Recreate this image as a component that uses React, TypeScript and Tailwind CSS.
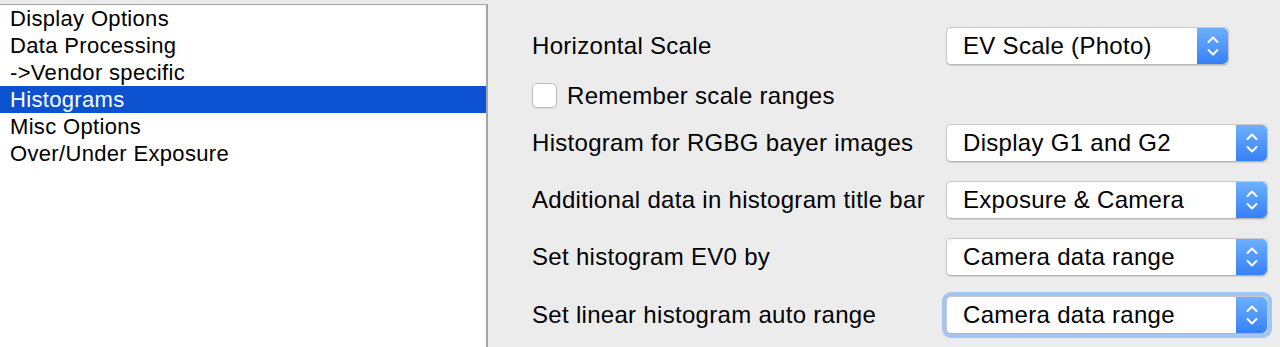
import React from "react";

const items = [
  "Display Options",
  "Data Processing",
  "->Vendor specific",
  "Histograms",
  "Misc Options",
  "Over/Under Exposure",
];

function Stepper() {
  return (
    <div className="w-[31px] h-full rounded-r-[5px] bg-linear-to-b from-[#6db0fd] to-[#3580f7] flex items-center justify-center">
      <svg width="14" height="24" viewBox="0 0 14 24" fill="none" stroke="white" strokeWidth="2" strokeLinecap="round" strokeLinejoin="round">
        <path d="M2.5 8 L7 3.5 L11.5 8" />
        <path d="M2.5 16 L7 20.5 L11.5 16" />
      </svg>
    </div>
  );
}

function Select({ value, width, focused }: { value: string; width: string; focused?: boolean }) {
  return (
    <div
      className={`${width} h-[38px] flex bg-white rounded-[5px] border border-[#c9c9c9] border-b-[#b5b5b5] shadow-[0_1px_1px_rgba(0,0,0,0.12)] ${
        focused ? "ring-[4px] ring-[#a2c5f4]" : ""
      }`}
    >
      <div className="flex-1 flex items-center pl-[16px] text-[24px] tracking-[0.3px] text-black">{value}</div>
      <Stepper />
    </div>
  );
}

function Row({ label, value, width, focused, mt }: { label: string; value: string; width: string; focused?: boolean; mt: string }) {
  return (
    <div className={`flex items-center ${mt}`}>
      <div className="w-[414px] text-[24px] tracking-[0.3px] text-black">{label}</div>
      <Select value={value} width={width} focused={focused} />
    </div>
  );
}

export default function App() {
  return (
    <div
      className="w-[1280px] h-[347px] bg-[#ececec] flex overflow-hidden"
      style={{ fontFamily: '"Liberation Sans", Arial, sans-serif' }}
    >
      <div className="w-[488px] mt-[4px] bg-white border-t-[1.5px] border-r-[2px] border-[#a4a4a4] shrink-0">
        {items.map((it) => (
          <div
            key={it}
            className={`h-[27px] leading-[27px] pl-[10px] text-[22px] tracking-[0.33px] ${
              it === "Histograms" ? "bg-[#0c52d0] text-white" : "text-black"
            }`}
          >
            {it}
          </div>
        ))}
      </div>
      <div className="flex-1 pl-[44px] pt-[27px] flex flex-col">
        <Row label="Horizontal Scale" value="EV Scale (Photo)" width="w-[283px]" mt="mt-0" />
        <div className="flex items-center mt-[18px] h-[25px]">
          <div className="w-[25px] h-[25px] rounded-[5px] bg-white border border-[#bdbdbd] shadow-[0_1px_1px_rgba(0,0,0,0.08)]" />
          <div className="ml-[10px] text-[24px] tracking-[0.3px] text-black">Remember scale ranges</div>
        </div>
        <Row label="Histogram for RGBG bayer images" value="Display G1 and G2" width="w-[322px]" mt="mt-[16px]" />
        <Row label="Additional data in histogram title bar" value="Exposure & Camera" width="w-[322px]" mt="mt-[19px]" />
        <Row label="Set histogram EV0 by" value="Camera data range" width="w-[322px]" mt="mt-[19px]" />
        <Row label="Set linear histogram auto range" value="Camera data range" width="w-[322px]" focused mt="mt-[20px]" />
      </div>
    </div>
  );
}
